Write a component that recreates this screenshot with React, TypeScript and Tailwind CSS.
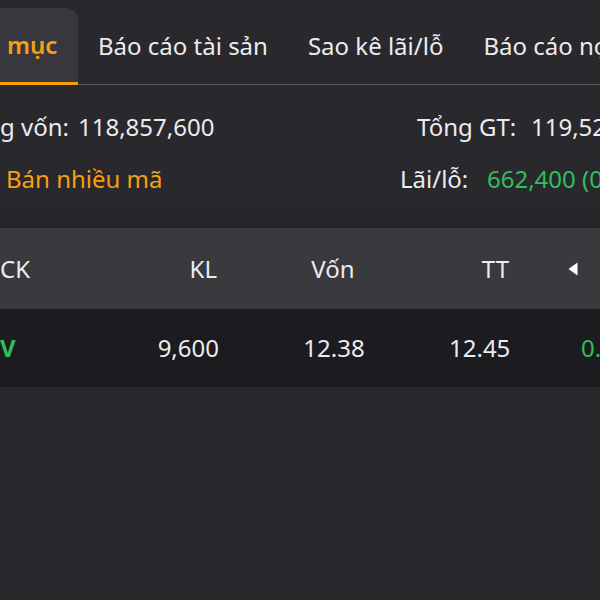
import React from "react";

const tabs = ["Báo cáo tài sản", "Sao kê lãi/lỗ", "Báo cáo nợ"];

export default function App() {
  return (
    <div
      className="w-[600px] h-[600px] overflow-hidden bg-[#29282d] text-[#ecebef] flex flex-col text-[24px]"
      style={{ fontFamily: '"Noto Sans", "Open Sans", sans-serif' }}
    >
      {/* tabs */}
      <div className="mt-2 h-[77px] flex shrink-0 border-b border-[#5c5b60]">
        <div className="w-[78px] shrink-0 bg-[#38373d] rounded-tr-xl border-b-[3px] border-[#f59e0b] -mb-px flex items-center pl-[7px] font-semibold text-[#f5a011]">
          mục
        </div>
        <div className="flex items-center whitespace-nowrap pl-[20px] gap-[40px]">
          {tabs.map((t) => (
            <span key={t} className="shrink-0">{t}</span>
          ))}
        </div>
      </div>

      {/* summary */}
      <div className="h-[124px] shrink-0 pt-[16px] whitespace-nowrap">
        <div className="flex items-center h-[52px]">
          <div className="w-[400px] flex shrink-0">
            <span className="w-[78px] shrink-0">g vốn:</span>
            <span>118,857,600</span>
          </div>
          <div className="flex pl-[17px]">
            <span className="w-[114px] shrink-0">Tổng GT:</span>
            <span className="shrink-0">119,520,000</span>
          </div>
        </div>
        <div className="flex items-center h-[52px]">
          <div className="w-[400px] shrink-0 pl-[6px] text-[#f5a011]">Bán nhiều mã</div>
          <div className="flex">
            <span className="w-[87px] shrink-0">Lãi/lỗ:</span>
            <span className="shrink-0 text-[#2fbf5b]">662,400 (0.55%)</span>
          </div>
        </div>
      </div>
      <div className="h-[19px] shrink-0 bg-[#252429]" />

      {/* table */}
      <div className="h-[81px] shrink-0 bg-[#3a393e] flex items-center whitespace-nowrap">
        <span className="w-[120px] shrink-0">CK</span>
        <span className="w-[97px] shrink-0 text-right">KL</span>
        <span className="w-[232px] shrink-0 text-center">Vốn</span>
        <span className="w-[60px] shrink-0 text-right">TT</span>
        <svg className="ml-[59px] shrink-0" width="10" height="14" viewBox="0 0 10 14">
          <path d="M9.5 0.5 L9.5 13.5 L0.5 7 Z" fill="#ffffff" />
        </svg>
      </div>
      <div className="h-[78px] shrink-0 bg-[#1c1b1f] flex items-center whitespace-nowrap">
        <span className="w-[120px] shrink-0 font-bold text-[#2fbf5b]">V</span>
        <span className="w-[99px] shrink-0 text-right">9,600</span>
        <span className="w-[230px] shrink-0 text-center">12.38</span>
        <span className="w-[60px] shrink-0 text-right">12.45</span>
        <span className="ml-[72px] shrink-0 text-[#2fbf5b]">0.07</span>
      </div>
    </div>
  );
}
